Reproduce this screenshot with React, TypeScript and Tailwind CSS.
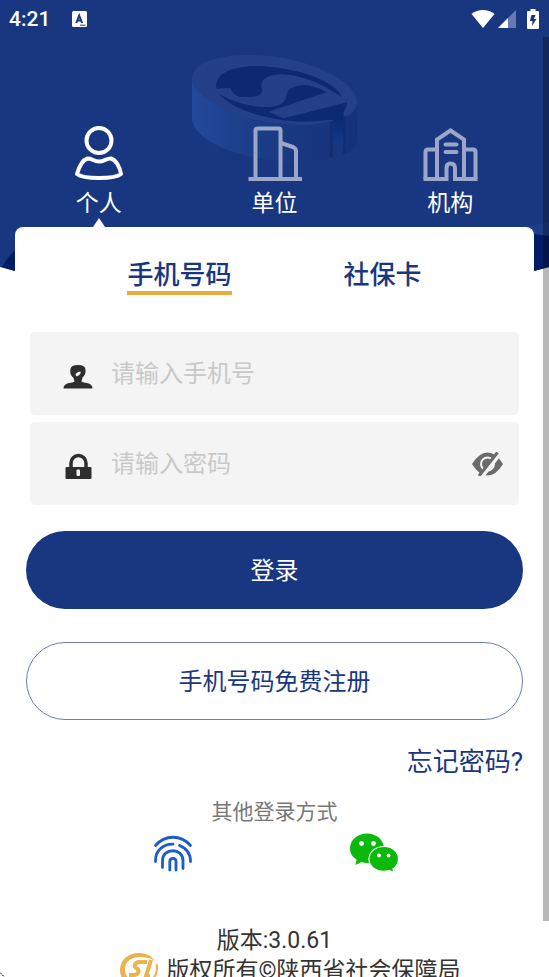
import type { ReactNode } from "react";

function HeaderArt() {
  return (
    <svg
      className="absolute inset-x-0 top-0 w-full"
      viewBox="0 0 549 275"
      fill="none"
      aria-hidden="true"
    >
      <defs>
        <linearGradient id="rim" x1="66" y1="0" x2="486" y2="0" gradientUnits="userSpaceOnUse">
          <stop offset="0" stopColor="#23499a" />
          <stop offset="0.5" stopColor="#1b3c87" />
          <stop offset="1" stopColor="#17347d" />
        </linearGradient>
        <linearGradient id="well" x1="0" y1="80" x2="0" y2="310" gradientUnits="userSpaceOnUse">
          <stop offset="0" stopColor="#0d296f" />
          <stop offset="0.7" stopColor="#0c2a74" />
          <stop offset="1" stopColor="#123a8c" />
        </linearGradient>
      </defs>
      <path d="M0 0H549V267L534 271L440 275H110L15 271L0 267Z" fill="#193780" />
      <path d="M2 267C6 260 10 254 20 246V272L15 271Z" fill="#001c66" />
      <path d="M525 227L549 222V236L530 234Z" fill="#1c3d88" />
      <path d="M528 229L534 234L549 236V267L534 271H528Z" fill="#001c66" />
      <g transform="translate(170 40) scale(.33333)">
        <path
          d="M66 115V235C66 300 210 364 380 365C420 364 460 360 486 352V200Z"
          fill="url(#rim)"
        />
        <path d="M520 215V342C545 335 561 322 561 300V180Z" fill="#15317b" />
        <path
          d="M66 115C66 70 140 45 235 45C400 45 561 120 561 185C561 205 545 228 525 230C518 226 520 218 524 212L486 243C420 262 330 256 260 240C150 212 66 160 66 115Z"
          fill="#234089"
        />
        <path
          d="M139 146C132 98 190 78 260 78C380 80 500 125 517 172L485 152C420 115 370 103 330 103C290 105 272 120 275 140C280 155 275 170 245 171H208C195 166 186 158 180 144Z"
          fill="url(#well)"
        />
        <path
          d="M143 160C190 185 230 200 285 201C335 200 345 185 348 170C350 145 375 135 405 135C430 137 450 146 470 157L295 215L340 235L531 187C532 205 518 212 520 225V298L488 306V240C470 240 420 247 385 245C290 240 190 210 143 160Z"
          fill="url(#well)"
        />
        <path d="M480 243H488V351L480 354Z" fill="#132d72" />
        <path d="M519 228H525V340L519 342Z" fill="#132d72" />
      </g>
    </svg>
  );
}

function PersonIcon() {
  return (
    <svg className="h-14 w-14" viewBox="0 0 56 56" fill="none" stroke="#fff" strokeWidth="4" aria-hidden="true">
      <circle cx="28" cy="14.500" r="12.500" />
      <path
        strokeLinejoin="round"
        d="M16.500 32.500C20 32 23 35.500 28 35.500C33 35.500 36 32 40 32.500C45 34 49 41 50 48C47 50.500 38 52 28 52C18 52 9 50.500 6 48C8 41 12 34 16.500 32.500Z"
      />
    </svg>
  );
}

function CompanyIcon() {
  return (
    <svg className="h-14 w-14" viewBox="0 0 56 56" fill="none" stroke="#9aa7c9" strokeWidth="4" aria-hidden="true">
      <path d="M1.500 53H55" />
      <path d="M8.500 52V4.500Q8.500 2.500 10.500 2.500H31.500Q33.500 2.500 33.500 4.500V52" />
      <path d="M34 17L46 21Q49 22.500 49 25V52" strokeLinejoin="round" />
    </svg>
  );
}

function InstitutionIcon() {
  return (
    <svg className="h-14 w-14" viewBox="0 0 56 56" fill="none" stroke="#9aa7c9" strokeWidth="4" aria-hidden="true">
      <path d="M3.500 53V26Q3.500 23.500 6 23.500H15M41 23.500H51Q53.500 23.500 53.500 26V53" />
      <path d="M15 53V13.500L28.500 4.500L42 13.500V53" />
      <path d="M1.500 53H24.500V42Q24.500 37.500 28.500 37.500Q33 37.500 33 42V53H55.500" />
      <path strokeLinecap="round" d="M23.500 18.500H34.500M23.500 26H34.500" />
    </svg>
  );
}

function CategoryTab({ icon, label, active = false }: { icon: ReactNode; label: string; active?: boolean }) {
  return (
    <button type="button" className="flex flex-1 flex-col items-center" aria-pressed={active}>
      {icon}
      <span className="mt-2 text-[23px] leading-7 text-white">{label}</span>
      <svg className="h-[9px] w-3" viewBox="0 0 12 9" aria-hidden="true">
        {active && <path d="M6 0L12 9H0Z" fill="#fff" />}
      </svg>
    </button>
  );
}

function StatusBar() {
  return (
    <div className="flex h-[37px] items-center px-[9px] text-white">
      <span className="text-[21px] leading-6 font-medium">4:21</span>
      <svg className="ml-[22px] h-4 w-[15px]" viewBox="0 0 15 16" aria-hidden="true">
        <rect width="15" height="16" rx="1.500" fill="#fff" />
        <path d="M4.300 12L7.200 4.500L10.100 12M5 9.500H9.500" fill="none" stroke="#193780" strokeWidth="2" />
        <path d="M8 14.200H13.500" stroke="#193780" strokeWidth="1" />
      </svg>
      <svg className="ml-auto h-5 w-6" viewBox="0 0 24 20" aria-hidden="true">
        <path d="M0.500 5C7 -0.500 17 -0.500 23.500 5L12 19Z" fill="#fff" />
      </svg>
      <svg className="ml-[3px] h-[18px] w-[18px]" viewBox="0 0 18 18" aria-hidden="true">
        <path d="M18 0V18H0Z" fill="#667ab0" />
        <path d="M10 8V18H0Z" fill="#fff" />
      </svg>
      <svg className="mr-px ml-[11px] h-5 w-3" viewBox="0 0 12 20" aria-hidden="true">
        <path d="M3.500 0H8.500V2H11Q12 2 12 3V19Q12 20 11 20H1Q0 20 0 19V3Q0 2 1 2H3.500Z" fill="#fff" />
        <path d="M4.500 6H8.500L7 10H9.500L5 17L5.500 12H2.800Z" fill="#193780" />
      </svg>
    </div>
  );
}

function Field({
  id,
  label,
  type,
  icon,
  children,
}: {
  id: string;
  label: string;
  type: string;
  icon: ReactNode;
  children?: ReactNode;
}) {
  return (
    <div className="flex h-[83px] items-center rounded-[5px] bg-[#f4f4f4] pr-4 pl-[33px]">
      <label htmlFor={id} aria-label={label} className="mr-[18px] shrink-0">
        {icon}
      </label>
      <input
        id={id}
        type={type}
        placeholder={label}
        className="h-10 min-w-0 flex-1 bg-transparent text-2xl text-[#333] outline-none placeholder:text-[#c9c9c9]"
      />
      {children}
    </div>
  );
}

export default function App() {
  return (
    <div
      lang="zh-CN"
      className="relative h-screen overflow-hidden bg-white font-['Roboto','Noto_Sans_CJK_SC',sans-serif]"
    >
      <HeaderArt />
      <div className="relative">
        <StatusBar />
        <nav className="flex px-[11px] pt-[89px]">
          <CategoryTab icon={<PersonIcon />} label="个人" active />
          <CategoryTab icon={<CompanyIcon />} label="单位" />
          <CategoryTab icon={<InstitutionIcon />} label="机构" />
        </nav>

        <form onSubmit={(e) => e.preventDefault()}>
          <section className="mx-[15px] rounded-lg bg-white px-[15px] pt-8">
            <div className="flex justify-center gap-28 text-[26px] leading-8 font-medium text-[#193780]">
              <button type="button" className="border-b-4 border-[#eda93b]">
                手机号码
              </button>
              <button type="button" className="border-b-4 border-transparent">
                社保卡
              </button>
            </div>
            <div className="mt-[37px] flex flex-col gap-[7px]">
              <Field
                id="phone"
                label="请输入手机号"
                type="tel"
                icon={
                  <svg className="h-[30px] w-[30px]" viewBox="0 0 30 30" aria-hidden="true">
                    <path
                      d="M7.500 10Q8 6 15 6Q22.500 6 22.500 11Q23 16 19.500 18.500L18.500 22.500Q20 23.500 24 24Q29.500 25 29.500 29.500H0.500Q0.500 25 6 24Q10 23.500 11.500 22.500L10.500 19Q6 15 7.500 10Z"
                      fill="#2e2e2e"
                    />
                    <path d="M12.500 16Q12.500 13.500 17.500 12.500Q18.500 15 14 17.500Z" fill="#f4f4f4" />
                  </svg>
                }
              />
              <Field
                id="password"
                label="请输入密码"
                type="password"
                icon={
                  <svg className="h-[30px] w-[30px]" viewBox="0 0 30 30" aria-hidden="true">
                    <path d="M8 19V14A7.500 7.500 0 0 1 23 14V19" fill="none" stroke="#2e2e2e" strokeWidth="3.500" />
                    <rect x="2.500" y="18" width="26" height="12" rx="1" fill="#2e2e2e" />
                    <rect x="13.500" y="20.500" width="3.500" height="6.500" rx="1" fill="#f4f4f4" />
                  </svg>
                }
              >
                <button type="button" aria-label="显示密码" className="shrink-0">
                  <svg className="h-6 w-[31px]" viewBox="0 0 31 24" aria-hidden="true">
                    <path d="M0 12Q7 0.500 15.500 0.500Q24 0.500 31 12Q24 23.500 15.500 23.500Q7 23.500 0 12Z" fill="#6b6b6b" />
                    <circle cx="15.500" cy="12" r="6.500" fill="none" stroke="#f4f4f4" strokeWidth="2" />
                    <path d="M9 25L28 1" stroke="#f4f4f4" strokeWidth="5" />
                    <path d="M7 24L25.500 0.500" stroke="#6b6b6b" strokeWidth="3" />
                  </svg>
                </button>
              </Field>
            </div>
          </section>

          <div className="px-[26px] pt-[26px] text-2xl">
            <button type="submit" className="block h-[78px] w-full rounded-full bg-[#193780] pt-0.5 text-white">
              登录
            </button>
            <button
              type="button"
              className="mt-[33px] block h-[78px] w-full rounded-full border border-[#6a7db0] pt-0.5 text-[#193780]"
            >
              手机号码免费注册
            </button>
            <div className="mt-6 text-right text-[26px] leading-9">
              <a href="#forgot" className="text-[#193780]">
                忘记密码?
              </a>
            </div>
          </div>
        </form>

        <p className="mt-[18px] text-center text-[21px] leading-7 text-[#777]">其他登录方式</p>
        <div className="mt-[7px] flex pr-[75px] pl-[72px]">
          <button type="button" aria-label="指纹登录" className="flex flex-1 justify-center">
            <svg
              className="h-10 w-10"
              viewBox="0 0 40 40"
              fill="none"
              stroke="#1b5bd0"
              strokeWidth="2.800"
              strokeLinecap="round"
              aria-hidden="true"
            >
              <path d="M2.500 12.500C12 1.500 28 1.500 37.500 12.500" />
              <path d="M2.500 28.500C2 18 10 11 20 11.200M26.500 12.500C34 15.500 37.500 21 37.500 28.500" />
              <path d="M9.500 34.500V27.500C9.500 14.500 30 14.500 30 27.500V35.500" />
              <path d="M16.800 37V28.500C16.800 24.300 23 24.300 23 28.500V37" />
            </svg>
          </button>
          <button type="button" aria-label="微信登录" className="flex flex-1 justify-center">
            <svg className="h-10 w-[50px]" viewBox="0 0 50 40" aria-hidden="true">
              <path
                d="M18 0.500C27.500 0.500 35 7 35 15.500C35 24 27.500 30 18 30Q15 30 12.500 29L6.500 32L7.500 26.500C3 23.500 1 20 1 15.500C1 7 8.500 0.500 18 0.500Z"
                fill="#0bb90b"
              />
              <path
                d="M35 13.500C43.500 13.500 49.500 19 49.500 26C49.500 30 47.500 33.500 44 36L45 39.500L40 37.500C29 40.500 20 34.500 20 26C20 19 26.500 13.500 35 13.500Z"
                fill="#0bb90b"
                stroke="#fff"
                strokeWidth="1.200"
              />
              <g fill="#fff">
                <circle cx="12.500" cy="10.500" r="2.400" />
                <circle cx="24.500" cy="10.500" r="2.400" />
                <circle cx="30" cy="22.500" r="1.900" />
                <circle cx="39.500" cy="22.500" r="1.900" />
              </g>
            </svg>
          </button>
        </div>

        <footer className="mt-14 text-center text-[23px] leading-6 whitespace-nowrap text-[#333]">
          <p>版本:3.0.61</p>
          <p className="flex items-center justify-center gap-2 pl-8">
            <svg className="h-9 w-[38px] shrink-0" viewBox="0 0 38 36" fill="none" aria-hidden="true">
              <path
                d="M35 8C31 2 25 0 19 0C8 0 0 7 0 17C0 27 8 34 19 34C22 34 25 33.500 27 32.500C14 32 5 26 5 16C5 8 12 4 20 4C26 4 31 5 35 8Z"
                fill="#e9b44f"
              />
              <path
                d="M27 9H20C15 9 13 13 17 15.500C20 18 18 22 14 22H9"
                stroke="#e9b44f"
                strokeWidth="4"
              />
              <path d="M31 7L26 23H30" stroke="#e9b44f" strokeWidth="4" />
              <path d="M36.500 11C38 17 36 24 31 27" stroke="#e9b44f" strokeWidth="2" />
            </svg>
            <span>版权所有©陕西省社会保障局</span>
          </p>
        </footer>
      </div>

      <div className="absolute top-[37px] right-0 bottom-14 w-1.5 bg-black/28" />
      <svg className="absolute bottom-0 left-0 h-[5px] w-[5px]" viewBox="0 0 5 5" aria-hidden="true">
        <path d="M0 0.500L4.500 5" stroke="#000" strokeDasharray="2 1" />
      </svg>
    </div>
  );
}
